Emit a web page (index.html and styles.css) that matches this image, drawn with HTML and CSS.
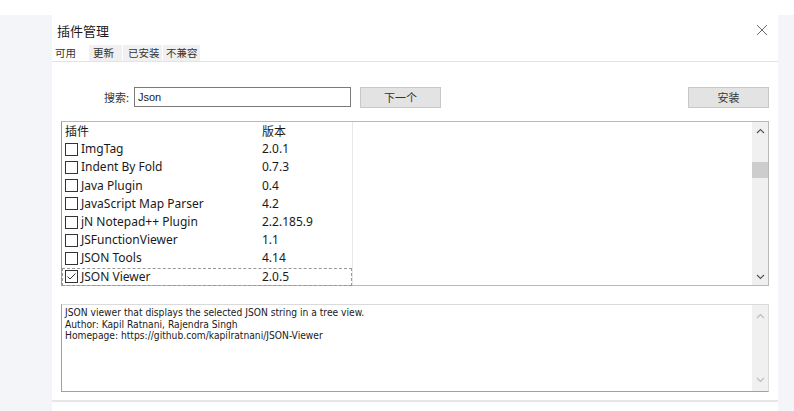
FILE: index.html
```html
<!DOCTYPE html>
<html lang="zh">
<head>
    <meta charset="UTF-8">
    <title>插件管理</title>
    <link rel="stylesheet" href="styles.css">
</head>
<body>
    <div id="page">
        <div class="gutter"></div>
        <div id="dialog">
            <div class="titlebar">
                <span class="title">插件管理</span>
                <span class="close">
                    <svg width="12" height="12" viewBox="0 0 12 12"><path d="M1 1 L11 11 M11 1 L1 11" stroke="#6a6a6a" stroke-width="1"/></svg>
                </span>
            </div>
            <div class="tabs">
                <span class="tab active">可用</span>
                <span class="tab t2">更新</span>
                <span class="tab t3">已安装</span>
                <span class="tab t4">不兼容</span>
            </div>

            <div class="search">
                <label>搜索:</label>
                <div class="input">Json</div>
                <div class="btn next">下一个</div>
                <div class="btn install">安装</div>
            </div>

            <div class="list">
                <div class="cols">
                    <div class="head"><span class="c1">插件</span><span class="c2">版本</span></div>
                    <div class="row"><span class="c1"><i class="cb"></i>ImgTag</span><span class="c2">2.0.1</span></div>
                    <div class="row"><span class="c1"><i class="cb"></i>Indent By Fold</span><span class="c2">0.7.3</span></div>
                    <div class="row"><span class="c1"><i class="cb"></i>Java Plugin</span><span class="c2">0.4</span></div>
                    <div class="row"><span class="c1"><i class="cb"></i>JavaScript Map Parser</span><span class="c2">4.2</span></div>
                    <div class="row"><span class="c1"><i class="cb"></i>jN Notepad++ Plugin</span><span class="c2">2.2.185.9</span></div>
                    <div class="row"><span class="c1"><i class="cb"></i>JSFunctionViewer</span><span class="c2">1.1</span></div>
                    <div class="row"><span class="c1"><i class="cb"></i>JSON Tools</span><span class="c2">4.14</span></div>
                    <div class="row sel"><span class="c1"><i class="cb on"><svg width="11" height="11" viewBox="0 0 11 11"><path d="M1.5 5.5 L4 8 L9.5 2.5" fill="none" stroke="#333" stroke-width="1"/></svg></i>JSON Viewer</span><span class="c2">2.0.5</span></div>
                </div>
                <div class="fill"></div>
                <div class="scroll">
                    <span class="arrow">
                        <svg width="9" height="6" viewBox="0 0 9 6"><path d="M1 5 L4.5 1.5 L8 5" fill="none" stroke="#555" stroke-width="1.2"/></svg>
                    </span>
                    <span class="thumb"></span>
                    <span class="track"></span>
                    <span class="arrow">
                        <svg width="9" height="6" viewBox="0 0 9 6"><path d="M1 1 L4.5 4.5 L8 1" fill="none" stroke="#555" stroke-width="1.2"/></svg>
                    </span>
                </div>
            </div>

            <div class="desc">
                <div class="text">JSON viewer that displays the selected JSON string in a tree view.<br>Author: Kapil Ratnani, Rajendra Singh<br>Homepage: https://github.com/kapilratnani/JSON-Viewer</div>
                <div class="scroll light">
                    <span class="arrow">
                        <svg width="9" height="6" viewBox="0 0 9 6"><path d="M1 5 L4.5 1.5 L8 5" fill="none" stroke="#bbb" stroke-width="1.2"/></svg>
                    </span>
                    <span class="track"></span>
                    <span class="arrow">
                        <svg width="9" height="6" viewBox="0 0 9 6"><path d="M1 1 L4.5 4.5 L8 1" fill="none" stroke="#bbb" stroke-width="1.2"/></svg>
                    </span>
                </div>
            </div>
            <div class="bottomline"></div>
        </div>
        <div class="gutter right"></div>
    </div>
</body>
</html>
```

FILE: styles.css
```css
body {
    margin: 0;
    background-color: white;
    font-family: "Noto Sans", "Noto Sans CJK SC", sans-serif;
    color: #1a1a1a;
}

#page {
    display: flex;
    height: 411px;
    padding-top: 15px;
    box-sizing: border-box;
}

.gutter {
    width: 52px;
    background-color: #f4f5f9;
}

.gutter.right {
    width: 16px;
}

#dialog {
    width: 726px;
    background-color: white;
    display: flex;
    flex-direction: column;
}

.titlebar {
    display: flex;
    justify-content: space-between;
    align-items: center;
    height: 30px;
    padding: 0 10px 0 5px;
}

.title {
    font-family: "Noto Sans CJK SC", sans-serif;
    font-size: 13px;
}

.close { display: flex; }

.tabs {
    display: flex;
    height: 16px;
    border-bottom: 1px solid #e3e3e3;
    font-family: "Noto Sans CJK SC", sans-serif;
    font-size: 10.5px;
    line-height: 16px;
    white-space: nowrap;
}

.tab {
    background-color: #f0f0f0;
    padding-left: 4px;
    margin-right: 1px;
    color: #333;
    box-sizing: border-box;
    flex-shrink: 0;
}

.tab.active {
    background-color: white;
    width: 36px;
    padding-left: 3px;
}

.t2 { width: 33px; }
.t3 { width: 39px; padding-left: 5px; }
.t4 { width: 37px; padding-left: 3px; }

.search {
    display: flex;
    align-items: center;
    margin-top: 24px;
    height: 22px;
}

.search label {
    font-family: "Noto Sans CJK SC", sans-serif;
    font-size: 11px;
    margin-left: 52px;
    width: 30px;
    color: #333;
}

.input {
    width: 212px;
    height: 18px;
    border: 1px solid #7a7a7a;
    font-family: "Liberation Sans", sans-serif;
    font-size: 11px;
    line-height: 18px;
    padding-left: 3px;
}

.btn {
    width: 79px;
    height: 19px;
    border: 1px solid #c8c8c8;
    background-color: #e3e3e3;
    font-family: "Noto Sans CJK SC", sans-serif;
    font-size: 11px;
    line-height: 19px;
    text-align: center;
    color: #333;
}

.next { margin-left: 9px; }
.install { margin-left: auto; margin-right: 9px; }

.list {
    display: flex;
    margin: 13px 9px 0 9px;
    height: 163px;
    border: 1px solid #b9b9b9;
    border-left-color: #9a9a9a;
    font-size: 12px;
}

.cols {
    width: 290px;
    border-right: 1px solid #e8e8e8;
}

.head, .row {
    display: flex;
    height: 18.2px;
    line-height: 18px;
}

.head { font-family: "Noto Sans CJK SC", sans-serif; font-size: 12px; }

.c1 {
    width: 197px;
    display: flex;
    align-items: center;
    padding-left: 3px;
}

.c2 { padding-left: 0; }

.cb {
    width: 13px;
    height: 13px;
    border: 1px solid #333;
    box-sizing: border-box;
    margin-right: 3px;
    display: flex;
    align-items: center;
    justify-content: center;
}

.row.sel {
    outline: 1px dashed #999;
    outline-offset: -1px;
}

.fill { flex: 1; }

.scroll {
    width: 16px;
    background-color: #f0f0f0;
    display: flex;
    flex-direction: column;
    align-items: center;
}

.arrow {
    height: 17px;
    display: flex;
    align-items: center;
    justify-content: center;
}

.thumb {
    width: 16px;
    height: 16px;
    margin-top: 23px;
    background-color: #cdcdcd;
}

.track { flex: 1; }

.desc {
    display: flex;
    margin: 18px 9px 0 9px;
    height: 86px;
    border: 1px solid #a0a0a0;
    border-top-color: #dadada;
    border-right-color: #dadada;
}

.desc .text {
    flex: 1;
    font-family: "DejaVu Sans Condensed", "DejaVu Sans", sans-serif;
    font-size: 10.2px;
    line-height: 11.5px;
    padding: 2px 0 0 3px;
}

.scroll.light .arrow { height: 22px; }

.bottomline {
    margin-top: 8px;
    border-top: 2px solid #e6e6e6;
}
```
